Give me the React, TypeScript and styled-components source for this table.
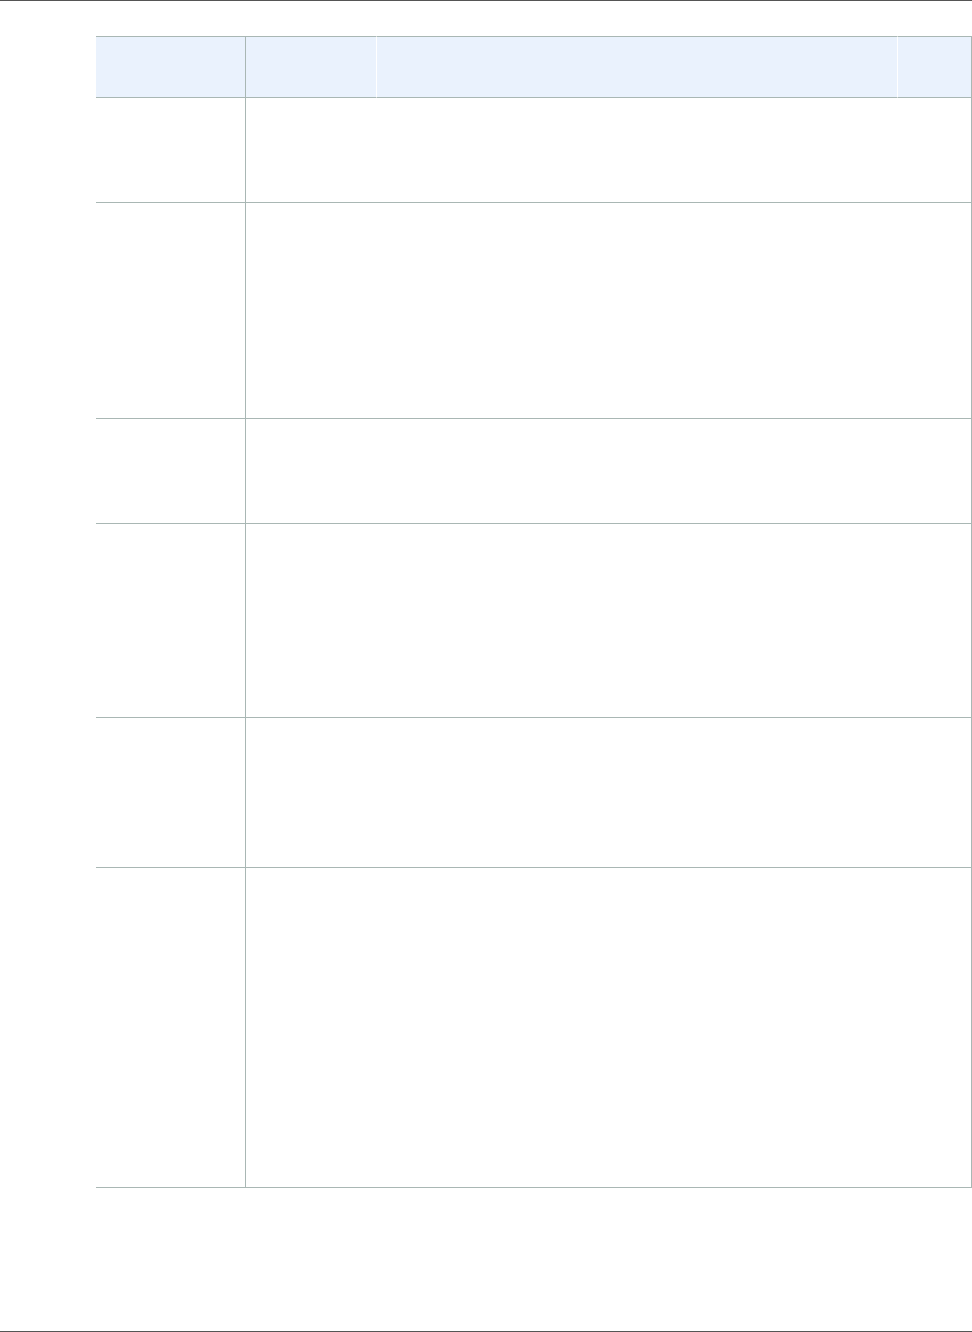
import * as React from 'react'
import styled, { createGlobalStyle } from 'styled-components'

const line = '#a9b7b4'
const headBg = '#eaf2fd'

const GlobalStyle = createGlobalStyle`
  html, body {
    margin: 0;
    padding: 0;
    background: #fff;
    font-family: "Liberation Sans", Arial, sans-serif;
  }
`

const Page = styled.div`
  box-sizing: border-box;
  height: 1332px;
  border-top: 1px solid #555;
  border-bottom: 1px solid #555;
  padding: 35px 0 0 96px;
`

const Table = styled.div`
  display: grid;
  grid-template-columns: 150px 131px 521px 74px;
  width: 876px;
`

const HeadCell = styled.div<{ $divider: 'gray' | 'white' }>`
  box-sizing: border-box;
  height: 62px;
  background: ${headBg};
  border-top: 1px solid ${line};
  border-bottom: 1px solid ${line};
  border-right: 1px solid ${p => (p.$divider === 'gray' ? line : '#fff')};
`

const KeyCell = styled.div<{ $h: number }>`
  box-sizing: border-box;
  height: ${p => p.$h}px;
  border-right: 1px solid ${line};
  border-bottom: 1px solid ${line};
`

const ValueCell = styled.div<{ $h: number }>`
  box-sizing: border-box;
  grid-column: 2 / -1;
  height: ${p => p.$h}px;
  border-right: 1px solid ${line};
  border-bottom: 1px solid ${line};
`

const rows = [105, 216, 105, 194, 150, 320]

export default function App() {
  return (
    <>
      <GlobalStyle />
      <Page>
        <Table>
          <HeadCell $divider="gray" />
          <HeadCell $divider="white" />
          <HeadCell $divider="white" />
          <HeadCell $divider="gray" />
          {rows.map((h, i) => (
            <React.Fragment key={i}>
              <KeyCell $h={h} />
              <ValueCell $h={h} />
            </React.Fragment>
          ))}
        </Table>
      </Page>
    </>
  )
}
